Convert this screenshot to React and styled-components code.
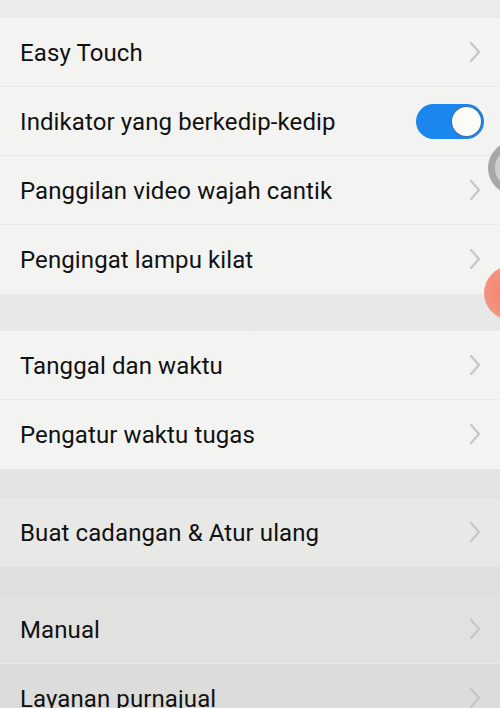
import React from 'react';
import styled, { createGlobalStyle } from 'styled-components';

const Global = createGlobalStyle`
  html, body { margin: 0; padding: 0; }
  body {
    width: 500px;
    height: 708px;
    overflow: hidden;
    background: #e9eae8;
    font-family: Roboto, "Noto Sans", sans-serif;
  }
`;

const Screen = styled.div`
  position: relative;
  width: 500px;
  height: 708px;
  overflow: hidden;
  background: linear-gradient(180deg, #ebebea 0%, #e6e7e5 60%, #d9dad8 100%);
  padding-top: 18px;
  box-sizing: border-box;
`;

const Group = styled.div`
  display: flex;
  flex-direction: column;
  margin-bottom: ${p => p.gap || 0}px;
`;

const Row = styled.div`
  height: 69px;
  display: flex;
  align-items: center;
  justify-content: space-between;
  padding: 0 16px 0 20px;
  background: ${p => p.bg || '#f3f4f2'};
  border-bottom: 1px solid ${p => (p.last ? 'transparent' : '#e9eae8')};
  box-sizing: border-box;
`;

const Label = styled.span`
  font-size: 24px;
  color: #111;
  letter-spacing: 0.1px;
  padding-top: 2px;
`;

const Chevron = styled.svg`
  width: 14px;
  height: 22px;
  margin-right: 2px;
`;

const Toggle = styled.div`
  width: 68px;
  height: 35px;
  border-radius: 18px;
  background: #1a86ee;
  display: flex;
  align-items: center;
  justify-content: flex-end;
  padding: 0 3px;
  box-sizing: border-box;
`;

const Knob = styled.div`
  width: 29px;
  height: 29px;
  border-radius: 50%;
  background: #fbfcf8;
  box-shadow: 0 0 0 1px #3c6ea6;
`;

const FloatRing = styled.div`
  position: absolute;
  left: 488px;
  top: 141px;
  width: 54px;
  height: 54px;
  border-radius: 50%;
  border: 7px solid #9a9b99;
  background: #c9cac8;
  box-sizing: border-box;
  opacity: 0.85;
`;

const FloatDot = styled.div`
  position: absolute;
  left: 484px;
  top: 266px;
  width: 54px;
  height: 54px;
  border-radius: 50%;
  background: radial-gradient(circle at 40% 50%, #f4826d 0%, #f39a86 70%, #f5c3b6 100%);
`;

const Arrow = () => (
  <Chevron viewBox="0 0 14 22">
    <path d="M3 2 L11 11 L3 20" fill="none" stroke="#c6c7c5" strokeWidth="2.2" strokeLinecap="round" strokeLinejoin="round" />
  </Chevron>
);

const groups = [
  {
    gap: 37,
    items: [
      { label: 'Easy Touch' },
      { label: 'Indikator yang berkedip-kedip', toggle: true },
      { label: 'Panggilan video wajah cantik' },
      { label: 'Pengingat lampu kilat' },
    ],
  },
  {
    gap: 29,
    items: [{ label: 'Tanggal dan waktu' }, { label: 'Pengatur waktu tugas' }],
  },
  { gap: 28, items: [{ label: 'Buat cadangan & Atur ulang', bg: '#e8e9e7' }] },
  { gap: 0, items: [{ label: 'Manual', bg: '#e1e2e0' }, { label: 'Layanan purnajual', bg: '#dcdddb' }] },
];

export default function App() {
  return (
    <>
      <Global />
      <Screen>
        {groups.map((g, gi) => (
          <Group key={gi} gap={g.gap}>
            {g.items.map((it, i) => (
              <Row key={it.label} bg={it.bg} last={i === g.items.length - 1}>
                <Label>{it.label}</Label>
                {it.toggle ? (
                  <Toggle>
                    <Knob />
                  </Toggle>
                ) : (
                  <Arrow />
                )}
              </Row>
            ))}
          </Group>
        ))}
        <FloatRing />
        <FloatDot />
      </Screen>
    </>
  );
}
